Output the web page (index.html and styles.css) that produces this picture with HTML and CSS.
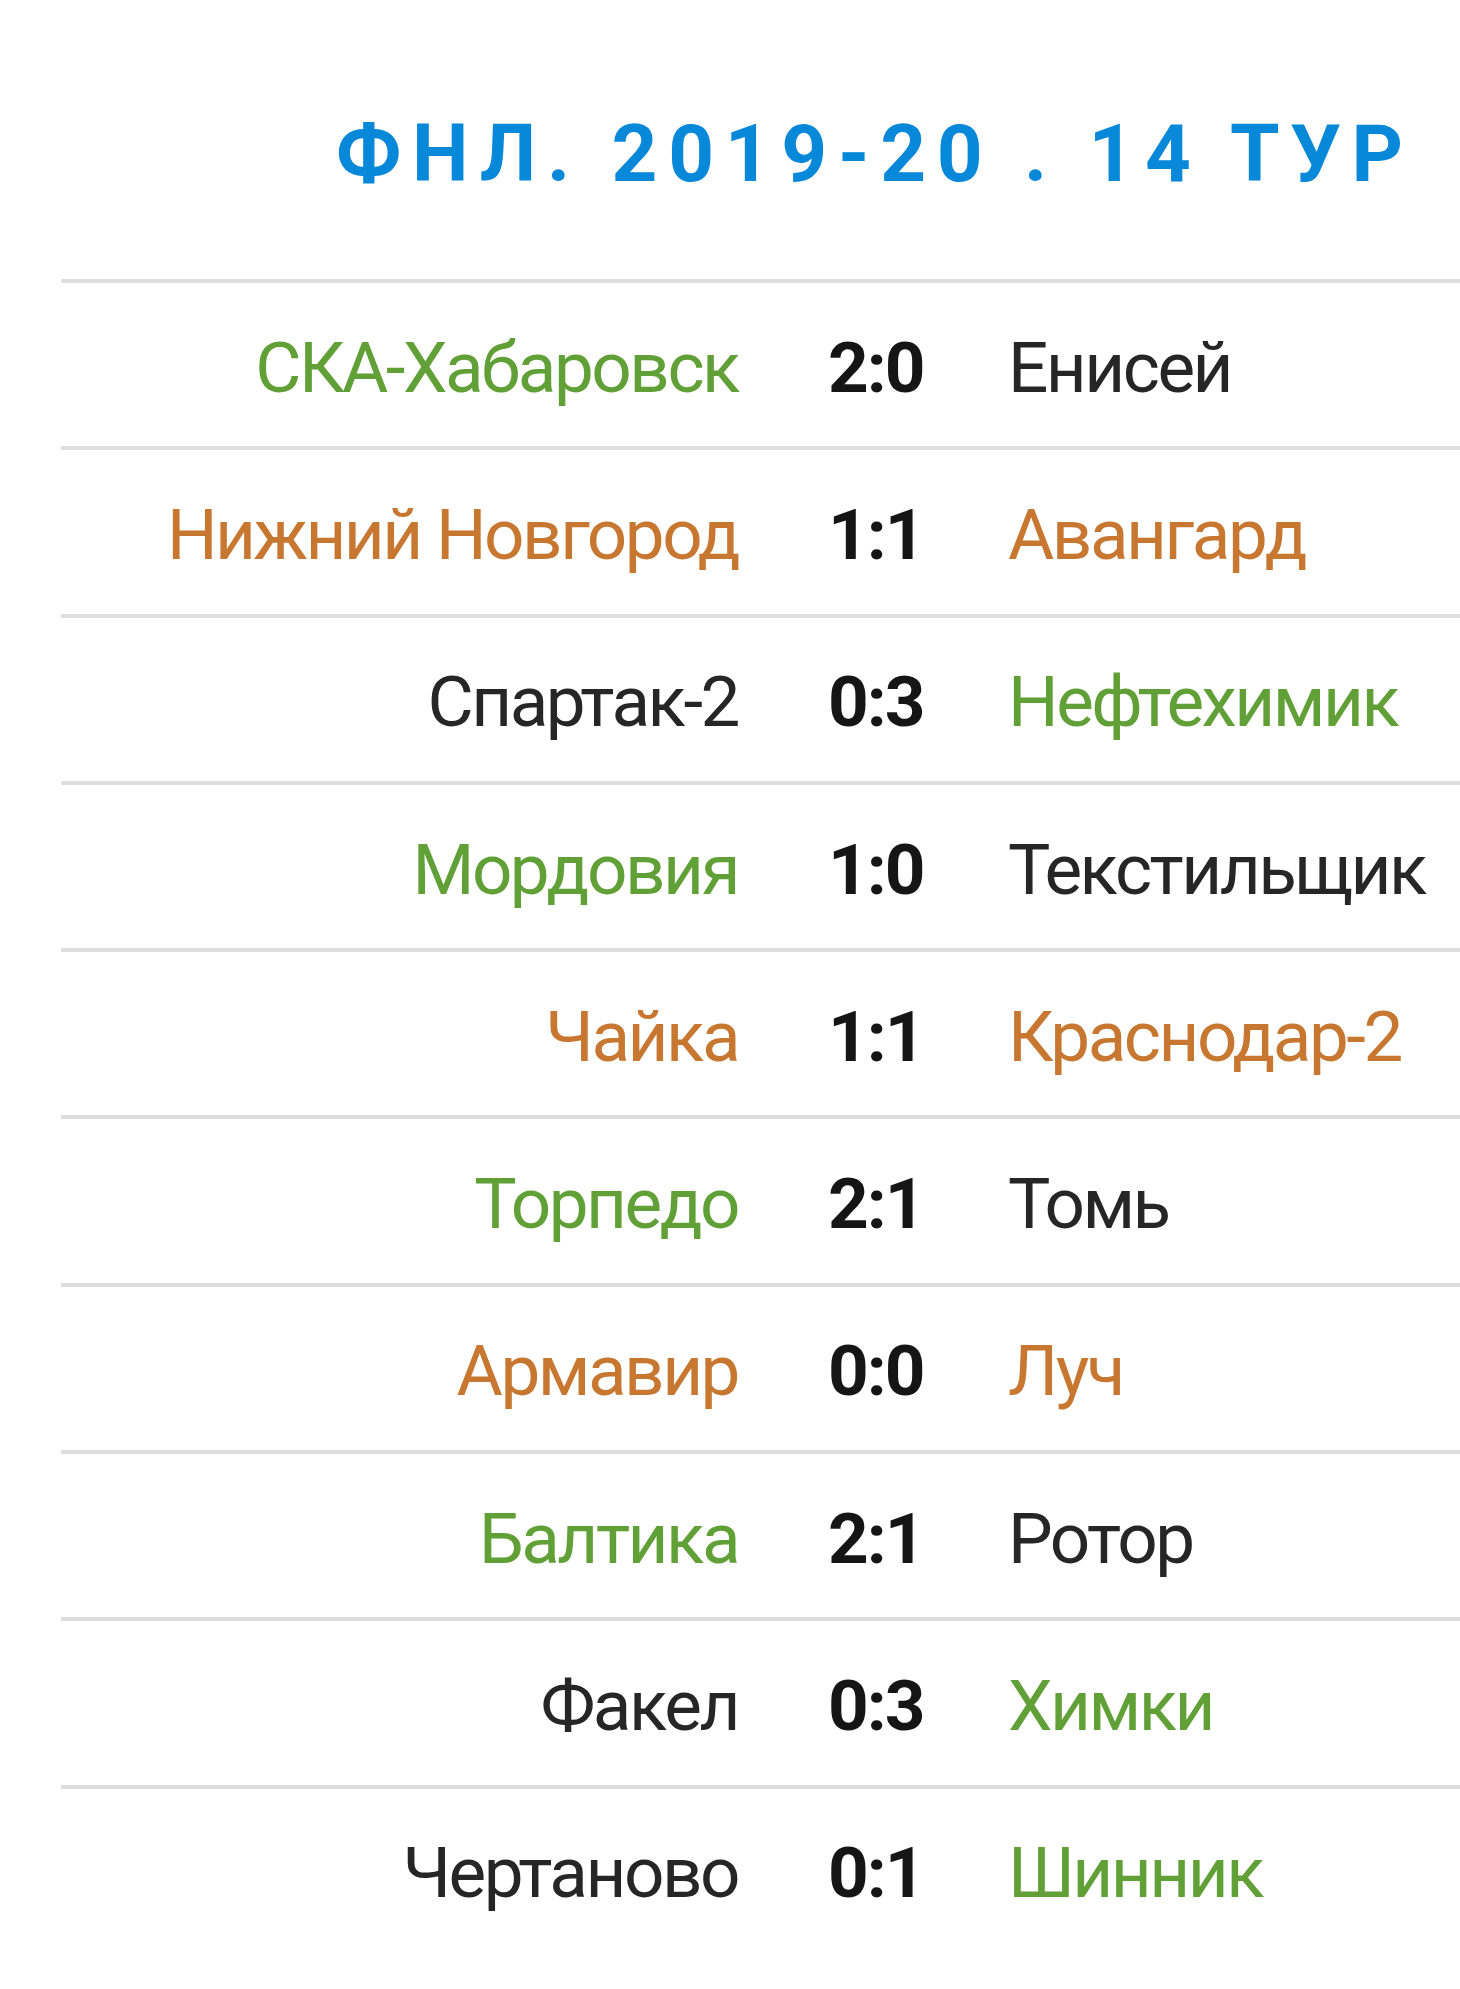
FILE: index.html
```html
<!DOCTYPE html>
<html lang="ru">
<head>
<meta charset="utf-8">
<title>ФНЛ. 2019-20 . 14 тур</title>
<link rel="stylesheet" href="styles.css">
</head>
<body>
<div class="widget">
  <h1 class="title">ФНЛ. 2019-20 . 14 ТУР</h1>
  <div class="matches">
    <div class="match"><span class="team home win">СКА-Хабаровск</span><span class="score">2:0</span><span class="team away">Енисей</span></div>
    <div class="match"><span class="team home draw">Нижний Новгород</span><span class="score">1:1</span><span class="team away draw">Авангард</span></div>
    <div class="match"><span class="team home">Спартак-2</span><span class="score">0:3</span><span class="team away win">Нефтехимик</span></div>
    <div class="match"><span class="team home win">Мордовия</span><span class="score">1:0</span><span class="team away">Текстильщик</span></div>
    <div class="match"><span class="team home draw">Чайка</span><span class="score">1:1</span><span class="team away draw">Краснодар-2</span></div>
    <div class="match"><span class="team home win">Торпедо</span><span class="score">2:1</span><span class="team away">Томь</span></div>
    <div class="match"><span class="team home draw">Армавир</span><span class="score">0:0</span><span class="team away draw">Луч</span></div>
    <div class="match"><span class="team home win">Балтика</span><span class="score">2:1</span><span class="team away">Ротор</span></div>
    <div class="match"><span class="team home">Факел</span><span class="score">0:3</span><span class="team away win">Химки</span></div>
    <div class="match"><span class="team home">Чертаново</span><span class="score">0:1</span><span class="team away win">Шинник</span></div>
  </div>
</div>
</body>
</html>
```
FILE: styles.css
```css
html, body {
  margin: 0;
  padding: 0;
  background: #ffffff;
}
body {
  font-family: Roboto, "Liberation Sans", Arial, sans-serif;
  overflow: hidden;
}
.widget {
  padding-left: 61px;
  padding-top: 114px;
}
.title {
  margin: 0 0 85px 0;
  padding-left: 275px;
  font-size: 80px;
  line-height: 80px;
  font-weight: 700;
  letter-spacing: 10.7px;
  color: #0788d8;
  white-space: nowrap;
}
.matches {
  display: flex;
  flex-direction: column;
}
.match {
  display: grid;
  grid-template-columns: 677px 90px 1fr;
  column-gap: 90px;
  align-items: center;
  box-sizing: border-box;
  height: 167.3px;
  padding-top: 5px;
  border-top: 4px solid #dedede;
  white-space: nowrap;
}
.team {
  font-size: 71px;
  letter-spacing: -2.5px;
  color: #262626;
}
.home {
  text-align: right;
}
.score {
  font-size: 71px;
  font-weight: 700;
  letter-spacing: -2px;
  color: #151515;
}
.win {
  color: #61a036;
}
.draw {
  color: #c77730;
}
```
